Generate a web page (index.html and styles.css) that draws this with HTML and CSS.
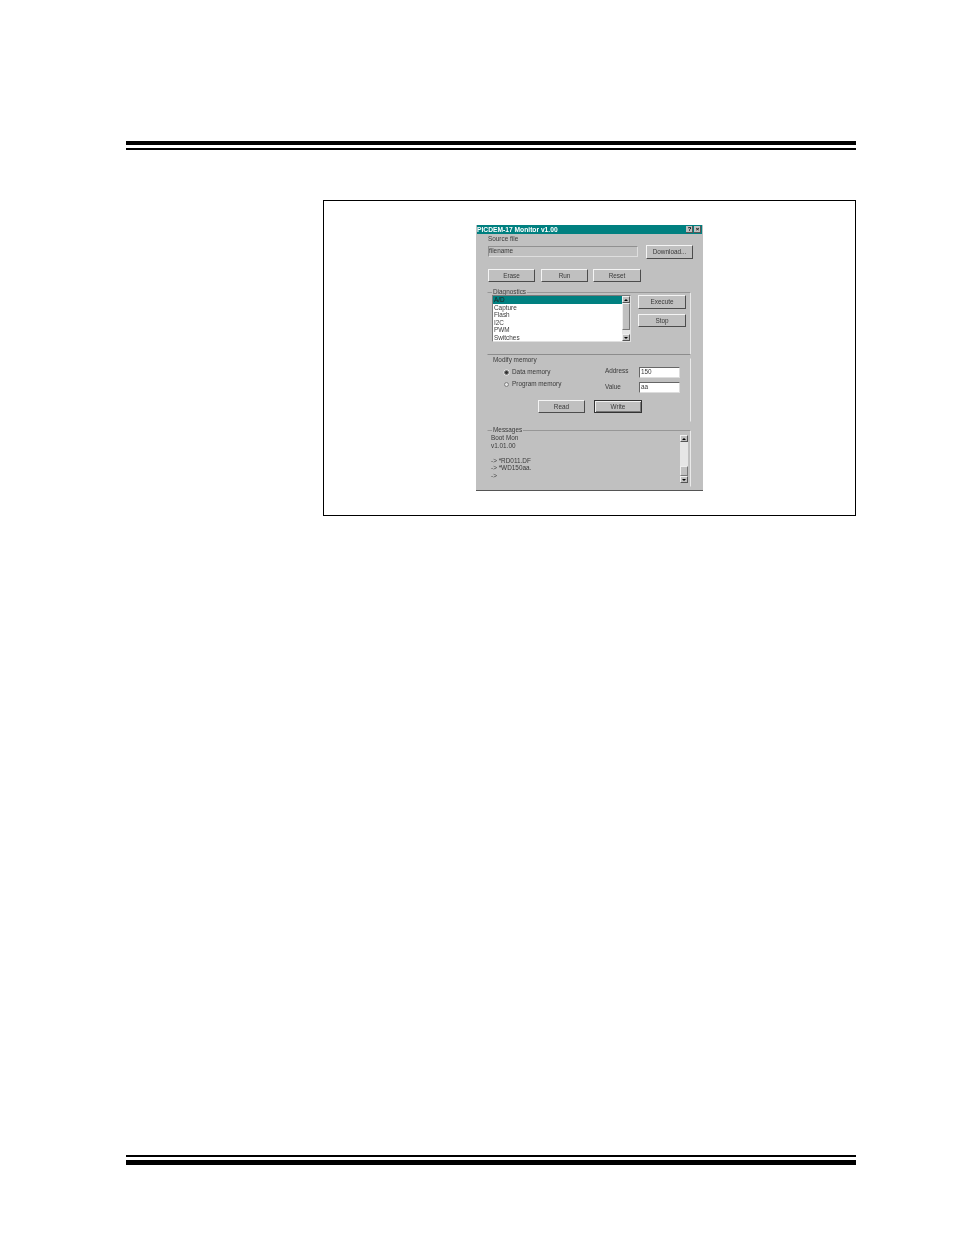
FILE: index.html
```html
<!DOCTYPE html>
<html>
  <head>
    <link rel="stylesheet" href="styles.css">
  </head>
  <body>
    <div class="page">
      <div class="rule-top"></div>
      <div class="figure">
        <div class="dialog">
          <div class="title-bar">
            <span class="title-text">PICDEM-17 Monitor v1.00</span>
            <span class="title-btn">?</span>
            <span class="title-btn close">×</span>
          </div>
          <div class="dialog-body">
            <div class="source-label">Source file</div>
            <div class="source-row">
              <div class="file-field">filename</div>
              <div class="btn download">Download...</div>
            </div>
            <div class="action-row">
              <div class="btn">Erase</div>
              <div class="btn">Run</div>
              <div class="btn reset">Reset</div>
            </div>

            <div class="group diagnostics">
              <div class="group-title">Diagnostics</div>
              <div class="diag-row">
                <div class="listbox">
                  <div class="list-items">
                    <div class="list-item selected">A/D</div>
                    <div class="list-item">Capture</div>
                    <div class="list-item">Flash</div>
                    <div class="list-item">I2C</div>
                    <div class="list-item">PWM</div>
                    <div class="list-item">Switches</div>
                  </div>
                  <div class="scrollbar">
                    <div class="arrow up"></div>
                    <div class="thumb list-thumb"></div>
                    <div class="track"></div>
                    <div class="arrow down"></div>
                  </div>
                </div>
                <div class="diag-buttons">
                  <div class="btn execute">Execute</div>
                  <div class="btn">Stop</div>
                </div>
              </div>
            </div>

            <div class="group open memory">
              <div class="group-title">Modify memory</div>
              <div class="memory-row">
                <div class="radios">
                  <div class="radio-row"><span class="radio checked"></span>Data memory</div>
                  <div class="radio-row"><span class="radio"></span>Program memory</div>
                </div>
                <div class="fields">
                  <div class="field-row"><span class="field-label">Address</span><div class="input">150</div></div>
                  <div class="field-row"><span class="field-label value-label">Value</span><div class="input">aa</div></div>
                </div>
              </div>
              <div class="memory-buttons">
                <div class="btn">Read</div>
                <div class="btn write">Write</div>
              </div>
            </div>

            <div class="group open messages">
              <div class="group-title">Messages</div>
              <div class="messages-row">
                <div class="log">
                  <div class="log-line">Boot Mon</div>
                  <div class="log-line">v1.01.00</div>
                  <div class="log-line">&nbsp;</div>
                  <div class="log-line">-&gt; *RD011.DF</div>
                  <div class="log-line">-&gt; *WD150aa.</div>
                  <div class="log-line">-&gt;</div>
                </div>
                <div class="scrollbar log-scroll">
                  <div class="arrow up"></div>
                  <div class="track"></div>
                  <div class="thumb log-thumb"></div>
                  <div class="arrow down"></div>
                </div>
              </div>
            </div>
          </div>
        </div>
      </div>
      <div class="rule-bottom"></div>
    </div>
  </body>
</html>
```

FILE: styles.css
```css
body {
  margin: 0;
  background: #fff;
  font-family: "Liberation Sans", Arial, sans-serif;
}
.page {
  width: 730px;
  padding: 141px 0 0 126px;
}
.rule-top {
  height: 4px;
  padding-bottom: 3px;
  background: #000;
  background-clip: content-box;
  border-bottom: 2px solid #000;
}
.rule-bottom {
  height: 2px;
  margin-top: 639px;
  padding-bottom: 3px;
  background: #000;
  background-clip: content-box;
  border-bottom: 5px solid #000;
}
.figure {
  box-sizing: border-box;
  width: 533px;
  height: 316px;
  margin: 50px 0 0 197px;
  padding: 24px 0 0 152px;
  border: 1px solid #000;
}

/* the dialog is a scan, so everything in it is slightly soft */
.dialog {
  box-sizing: border-box;
  width: 227px;
  height: 266px;
  padding-left: 1px;
  background: #c0c0c0;
  border-bottom: 1px solid #555;
  color: #3a3a3a;
  font-size: 6.4px;
  line-height: 8px;
  filter: blur(0.4px);
}
.title-bar {
  display: flex;
  align-items: center;
  height: 9px;
  margin-right: 1px;
  background: #008080;
  color: #fff;
  font-size: 6.7px;
  font-weight: bold;
}
.title-text {
  flex: 1;
}
.title-btn {
  width: 7px;
  height: 7px;
  background: #c0c0c0;
  color: #000;
  font-size: 6px;
  line-height: 7px;
  text-align: center;
  box-shadow: inset -1px -1px 0 #555;
}
.close {
  margin: 0 1px;
}
.dialog-body {
  padding-left: 10px;
}
.source-label {
  margin: 1px 0 0 1px;
}
.source-row {
  display: flex;
  height: 14px;
  margin: 2px 0 0 1px;
}
.file-field {
  box-sizing: border-box;
  width: 150px;
  height: 11px;
  margin-top: 1px;
  background: #c0c0c0;
  border: 1px solid #909090;
  border-right-color: #dedede;
  border-bottom-color: #dedede;
}
.btn {
  box-sizing: border-box;
  flex: none;
  width: 47px;
  height: 13px;
  background: #c0c0c0;
  border: 1px solid;
  border-color: #f4f4f4 #4c4c4c #4c4c4c #f4f4f4;
  line-height: 11px;
  text-align: center;
}
.download {
  height: 14px;
  margin-left: 8px;
  line-height: 12px;
}
.action-row {
  display: flex;
  gap: 6px;
  margin: 10px 0 0 1px;
}
.reset {
  width: 48px;
  margin-left: -1px;
}
.group {
  box-sizing: border-box;
  width: 204px;
  border: 1px solid #979797;
  border-left-color: transparent;
  border-right-color: #e8e8e8;
  border-bottom-color: #8c8c8c;
}
.group-title {
  width: fit-content;
  height: 8px;
  margin: -5px 0 -1px 4px;
  padding: 0 1px;
  background: #c0c0c0;
}
.diagnostics {
  height: 63px;
  margin-top: 10px;
}
.diag-row {
  display: flex;
  margin-left: 4px;
}
.listbox {
  box-sizing: border-box;
  display: flex;
  width: 139px;
  height: 47px;
  background: #fff;
  border: 1px solid #7a7a7a;
  border-right-color: #e0e0e0;
  border-bottom-color: #e0e0e0;
}
.list-items {
  flex: 1;
}
.list-item {
  height: 7.5px;
  padding-left: 1px;
  line-height: 7.5px;
}
.selected {
  background: #008080;
  color: #222;
}
.scrollbar {
  display: flex;
  flex-direction: column;
  width: 8px;
}
.arrow {
  box-sizing: border-box;
  display: flex;
  align-items: center;
  justify-content: center;
  flex: none;
  height: 7px;
  background: #c0c0c0;
  border: 1px solid;
  border-color: #f0f0f0 #555 #555 #f0f0f0;
}
.arrow::after {
  content: "";
  border-left: 2px solid transparent;
  border-right: 2px solid transparent;
}
.up::after {
  border-bottom: 2px solid #000;
}
.down::after {
  border-top: 2px solid #000;
}
.track {
  flex: 1;
  background: #e6e6e6;
}
.thumb {
  box-sizing: border-box;
  background: #c0c0c0;
  border: 1px solid;
  border-color: #eee #777 #777 #eee;
}
.list-thumb {
  height: 27px;
}
.diag-buttons {
  display: flex;
  flex-direction: column;
  gap: 5px;
  margin-left: 7px;
}
.diag-buttons .btn {
  width: 48px;
}
.execute {
  height: 14px;
}
.open {
  border-top-color: transparent;
  border-bottom-color: transparent;
  border-right-color: #eaeaea;
}
.memory {
  height: 64px;
  margin-top: 3px;
}
.memory .group-title {
  margin: -3px 0 0 4px;
}
.memory-row {
  display: flex;
  margin-top: 3px;
}
.radios {
  display: flex;
  flex-direction: column;
  gap: 4px;
  margin: 1px 0 0 16px;
}
.radio-row {
  display: flex;
  align-items: center;
  gap: 3px;
}
.radio {
  box-sizing: border-box;
  width: 5px;
  height: 5px;
  background: #e4e4e4;
  border: 1px solid #808080;
  border-radius: 50%;
}
.checked {
  background: #333;
  box-shadow: 0 0 0 0.5px #eee;
}
.fields {
  display: flex;
  flex-direction: column;
  gap: 4px;
  margin: 0 10px 0 auto;
}
.field-row {
  display: flex;
  justify-content: space-between;
  width: 75px;
}
.value-label {
  margin-top: 1px;
}
.input {
  box-sizing: border-box;
  width: 41px;
  height: 11px;
  padding-left: 1px;
  background: #fff;
  border: 1px solid #666;
  border-right-color: #ddd;
  border-bottom-color: #ddd;
}
.memory-buttons {
  display: flex;
  gap: 9px;
  margin: 7px 0 0 50px;
}
.write {
  width: 48px;
  border: 1px solid #333;
  box-shadow: inset 1px 1px 0 #f0f0f0, inset -1px -1px 0 #777;
}
.messages {
  height: 57px;
  margin-top: 8px;
  border-top-color: #979797;
}
.messages .group-title {
  margin-bottom: 0;
}
.messages-row {
  display: flex;
  margin-left: 3px;
}
.log {
  flex: 1;
}
.log-line {
  height: 7.6px;
  line-height: 7.6px;
}
.log-scroll {
  height: 48px;
  margin: 1px 2px 0 0;
}
.log-thumb {
  flex: none;
  height: 10px;
}
```
